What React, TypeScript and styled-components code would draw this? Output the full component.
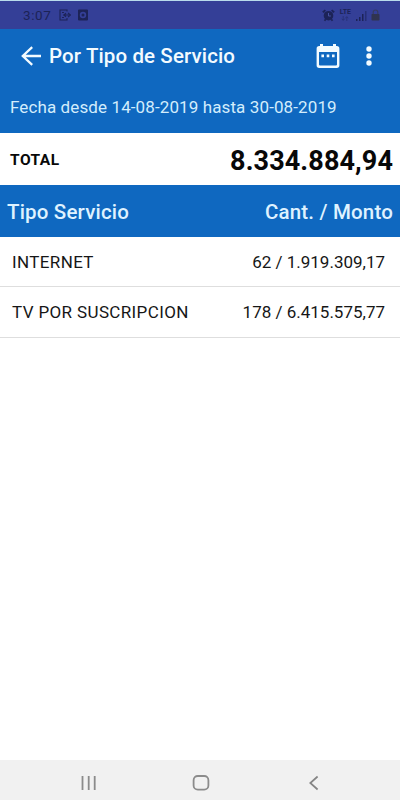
import React from "react";
import styled, { createGlobalStyle } from "styled-components";

const GlobalStyle = createGlobalStyle`
  * { box-sizing: border-box; }
  body { margin: 0; background: #fff; font-family: Roboto, sans-serif; }
`;

const Screen = styled.div`
  width: 400px;
  height: 800px;
  display: flex;
  flex-direction: column;
  background: #fff;
  color: #080808;
  overflow: hidden;
`;

const StatusBar = styled.div`
  height: 29px;
  flex: none;
  display: flex;
  align-items: center;
  justify-content: space-between;
  padding: 0 20px 0 23px;
  border-top: 1px solid #b9dcec;
  background: #343f97;
  color: #1c2357;
`;

const StatusGroup = styled.div<{ $gap: number }>`
  display: flex;
  align-items: center;
  gap: ${(p) => p.$gap}px;
  svg { display: block; }
`;

const Clock = styled.span`
  font-size: 13.5px;
  line-height: 16px;
  letter-spacing: 0.6px;
  margin-right: 1px;
`;

const Network = styled.div`
  display: flex;
  flex-direction: column;
  align-items: center;
  font-size: 7px;
  line-height: 7px;
  font-weight: 700;
`;

const AppBar = styled.header`
  height: 53px;
  flex: none;
  display: flex;
  align-items: center;
  padding: 0 21px 0 20px;
  background: #0f68c0;
  color: #f3fbff;
  svg { display: block; }
`;

const Title = styled.h1`
  margin: 0 auto 0 7px;
  font-size: 20.5px;
  line-height: 24px;
  font-weight: 500;
  letter-spacing: 0.11px;
  white-space: nowrap;
`;

const Actions = styled.div`
  display: flex;
  align-items: center;
  gap: 19px;
`;

const DateRange = styled.div`
  height: 51px;
  flex: none;
  padding: 15px 10px 0;
  background: #0f68c0;
  color: #d3edfc;
  font-size: 17px;
  line-height: 20px;
  letter-spacing: 0.11px;
  white-space: nowrap;
`;

const TotalRow = styled.div`
  height: 52px;
  flex: none;
  display: flex;
  align-items: center;
  justify-content: space-between;
  padding: 2px 7px 0 10px;
  font-weight: 700;
`;

const TotalLabel = styled.span`
  font-size: 15.5px;
  letter-spacing: 0.5px;
`;

const TotalValue = styled.span`
  padding-top: 2px;
  font-size: 27px;
  letter-spacing: 0.1px;
`;

const TableHead = styled.div`
  height: 52px;
  flex: none;
  display: flex;
  align-items: center;
  justify-content: space-between;
  padding: 2px 7px 0;
  background: #0f68c0;
  color: #dff2ff;
  font-size: 20.5px;
  font-weight: 500;
`;

const HeadCell = styled.span`
  letter-spacing: 0.18px;
`;

const Row = styled.div<{ $height: number }>`
  height: ${(p) => p.$height}px;
  flex: none;
  display: flex;
  align-items: center;
  justify-content: space-between;
  padding: 0 15px 0 12px;
  border-bottom: 1px solid #dedede;
  font-size: 17px;
  color: #161616;
`;

const Cell = styled.span<{ $spacing: number }>`
  letter-spacing: ${(p) => p.$spacing}px;
`;

const NavBar = styled.nav`
  height: 40px;
  flex: none;
  margin-top: auto;
  display: flex;
  align-items: center;
  gap: 95px;
  padding: 5px 0 0 80px;
  background: #f1f1f1;
  svg { display: block; }
`;

const rows = [
  { name: "INTERNET", value: "62 / 1.919.309,17", height: 50 },
  { name: "TV POR SUSCRIPCION", value: "178 / 6.415.575,77", height: 51 },
];

const ShareIcon = () => (
  <svg width="12" height="12" viewBox="0 0 12 12" fill="none" stroke="currentColor" strokeWidth="1.1">
    <path d="M8 2.5V1H1v10h7V9M3 3.5h2M3 8.5h2M4 6h6M7 4.2 4.8 6 7 7.8M9 3.8 11.4 6 9 8.2" />
  </svg>
);

const CameraIcon = () => (
  <svg width="10" height="12" viewBox="0 0 10 12">
    <path fill="currentColor" fillRule="evenodd" d="M1 .5h8q1 0 1 1v9q0 1-1 1H1q-1 0-1-1v-9q0-1 1-1Zm4 2.3a3.2 3.2 0 1 0 0 6.4 3.2 3.2 0 0 0 0-6.4Z" />
    <circle cx="5" cy="6" r="1.5" fill="currentColor" />
  </svg>
);

const AlarmIcon = () => (
  <svg width="13" height="13" viewBox="0 0 13 13" fill="none" stroke="currentColor">
    <path strokeWidth="1.8" d="M.8 3.2 3.4 1.1M12.2 3.2 9.6 1.1M2.5 11.8l1.2-1.5M10.5 11.8 9.3 10.3" />
    <circle cx="6.5" cy="6.7" r="4.8" fill="currentColor" stroke="none" />
    <path stroke="#4450a0" d="M6.5 4v3h2.4" />
  </svg>
);

const DataArrows = () => (
  <svg width="8" height="5" viewBox="0 0 8 5" fill="none" stroke="currentColor" strokeWidth=".8" opacity=".55">
    <path d="M2.2 0v4M.8 2.8l1.4 1.6 1.4-1.6M5.8 5V1M4.4 2.2 5.8.6l1.4 1.6" />
  </svg>
);

const SignalIcon = () => (
  <svg width="11" height="11" viewBox="0 0 11 11" fill="currentColor">
    <path d="M0 9h1.5v2H0zM3 7h1.5v4H3zM6 4h1.5v7H6z" />
    <path opacity=".55" d="M9 1h1.5v10H9z" />
  </svg>
);

const LockIcon = () => (
  <svg width="9" height="12" viewBox="0 0 9 12">
    <path fill="none" stroke="#363c60" strokeWidth="1.2" d="M2.2 6V3.3a2.3 2.3 0 0 1 4.6 0V6" />
    <rect x=".5" y="5" width="8" height="6.5" rx=".8" fill="#30344f" />
  </svg>
);

const BackArrow = () => (
  <svg width="22" height="20" viewBox="0 0 22 20" fill="none" stroke="currentColor" strokeWidth="2.3">
    <path d="M21 10H2.8M12.2 1.2 2.8 10l9.4 8.8" />
  </svg>
);

const CalendarIcon = () => (
  <svg width="24" height="26" viewBox="0 0 24 26">
    <path
      fill="currentColor"
      fillRule="evenodd"
      d="M4 1h3v2h10V1h3v2h.8Q23.4 3 23.4 5.7v16.6q0 2.7-2.6 2.7H3.2Q.6 25 .6 22.3V5.7Q.6 3 3.2 3H4ZM3 9v12.6q0 1 1 1h16q1 0 1-1V9Z"
    />
    <path fill="currentColor" d="M5.4 11.6H8v2.6H5.4zM10.7 11.6h2.6v2.6h-2.6zM16 11.6h2.6v2.6H16z" />
  </svg>
);

const MoreIcon = () => (
  <svg width="20" height="20" viewBox="0 0 20 20" fill="currentColor">
    <circle cx="10" cy="3" r="2.7" />
    <circle cx="10" cy="10" r="2.7" />
    <circle cx="10" cy="17" r="2.7" />
  </svg>
);

const RecentsIcon = () => (
  <svg width="17" height="16" viewBox="0 0 17 16" stroke="#8b8b8b" strokeWidth="1.8">
    <path d="M2.5 1v14M8.7 1v14M14.7 1v14" />
  </svg>
);

const HomeIcon = () => (
  <svg width="18" height="18" viewBox="0 0 18 18" fill="none" stroke="#8b8b8b" strokeWidth="1.8">
    <rect x="1.6" y="2" width="14.8" height="13.6" rx="4.2" />
  </svg>
);

const NavBackIcon = () => (
  <svg width="14" height="16" viewBox="0 0 14 16" fill="none" stroke="#858585" strokeWidth="1.7">
    <path d="M12.6 1.5 5.3 8l7.3 6.5" />
  </svg>
);

export default function App() {
  return (
    <>
      <GlobalStyle />
      <Screen>
        <StatusBar>
          <StatusGroup $gap={7}>
            <Clock>3:07</Clock>
            <ShareIcon />
            <CameraIcon />
          </StatusGroup>
          <StatusGroup $gap={4.5}>
            <AlarmIcon />
            <Network>
              LTE
              <DataArrows />
            </Network>
            <SignalIcon />
            <LockIcon />
          </StatusGroup>
        </StatusBar>
        <AppBar>
          <BackArrow />
          <Title>Por Tipo de Servicio</Title>
          <Actions>
            <CalendarIcon />
            <MoreIcon />
          </Actions>
        </AppBar>
        <DateRange>Fecha desde 14-08-2019 hasta 30-08-2019</DateRange>
        <TotalRow>
          <TotalLabel>TOTAL</TotalLabel>
          <TotalValue>8.334.884,94</TotalValue>
        </TotalRow>
        <TableHead>
          <HeadCell>Tipo Servicio</HeadCell>
          <HeadCell>Cant. / Monto</HeadCell>
        </TableHead>
        {rows.map((row) => (
          <Row key={row.name} $height={row.height}>
            <Cell $spacing={0.37}>{row.name}</Cell>
            <Cell $spacing={0}>{row.value}</Cell>
          </Row>
        ))}
        <NavBar>
          <RecentsIcon />
          <HomeIcon />
          <NavBackIcon />
        </NavBar>
      </Screen>
    </>
  );
}
